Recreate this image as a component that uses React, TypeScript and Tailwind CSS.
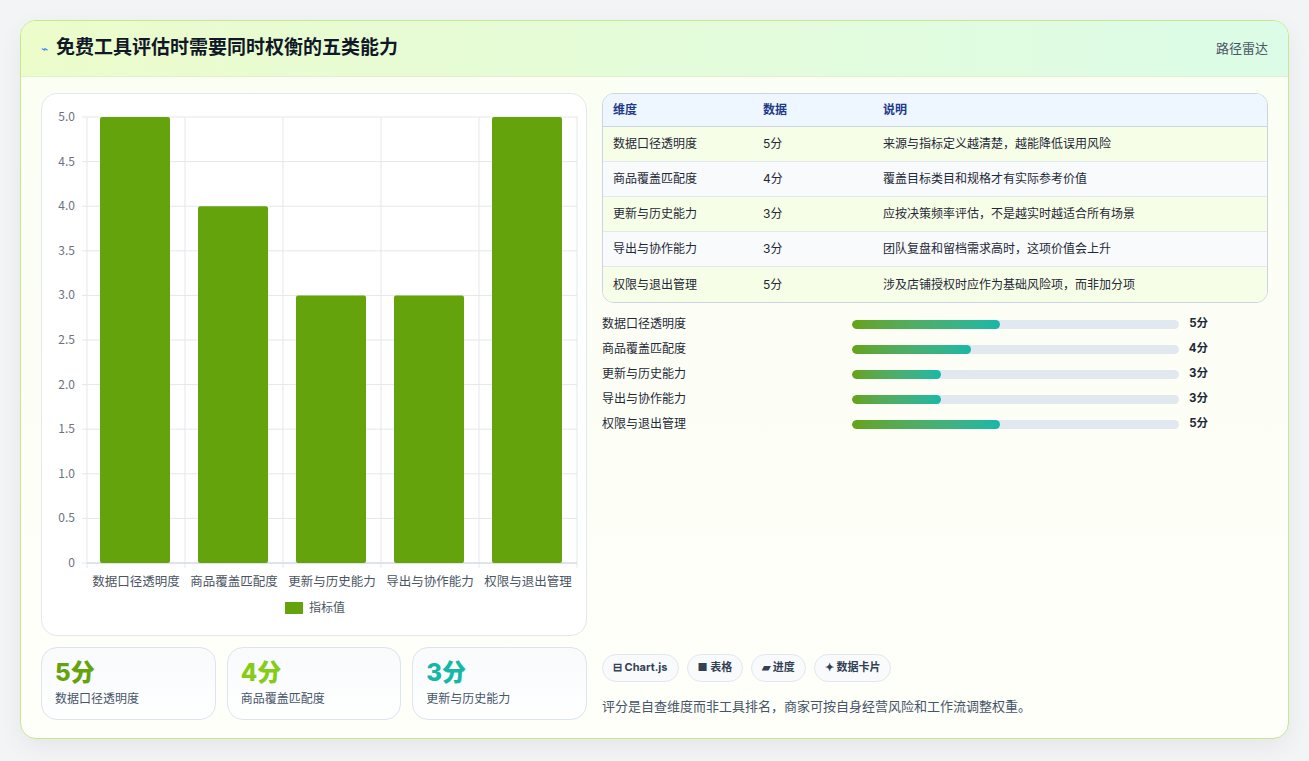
const rows = [
  { name: "数据口径透明度", score: 5, note: "来源与指标定义越清楚，越能降低误用风险" },
  { name: "商品覆盖匹配度", score: 4, note: "覆盖目标类目和规格才有实际参考价值" },
  { name: "更新与历史能力", score: 3, note: "应按决策频率评估，不是越实时越适合所有场景" },
  { name: "导出与协作能力", score: 3, note: "团队复盘和留档需求高时，这项价值会上升" },
  { name: "权限与退出管理", score: 5, note: "涉及店铺授权时应作为基础风险项，而非加分项" },
];

const Chart = () => {
  const top = 23;
  const bottom = 469;
  const left = 45;
  const right = 535;
  const col = (right - left) / 5;
  const ticks = [0, 0.5, 1, 1.5, 2, 2.5, 3, 3.5, 4, 4.5, 5];
  const y = (v: number) => bottom - ((bottom - top) * v) / 5;
  return (
    <svg width="546" height="541" className="block" style={{ fontFamily: "'Noto Sans CJK SC', sans-serif" }}>
      {ticks.map((t) => (
        <g key={t}>
          <line x1={left - 5} x2={right} y1={y(t)} y2={y(t)} stroke="#e5e7eb" />
          <text x={left - 12} y={y(t) + 4} textAnchor="end" fontSize="12" fill="#6b7280">
            {t === 0 ? "0" : t.toFixed(1)}
          </text>
        </g>
      ))}
      {[0, 1, 2, 3, 4, 5].map((i) => (
        <line key={i} x1={left + col * i} x2={left + col * i} y1={top} y2={bottom + 5} stroke="#e5e7eb" />
      ))}
      <line x1={left} x2={right} y1={bottom} y2={bottom} stroke="#cbd5e1" />
      {rows.map((r, i) => (
        <g key={r.name}>
          <rect x={left + col * i + 13} y={y(r.score)} width={70} height={bottom - y(r.score)} rx="2" fill="#65a30d" />
          <text x={left + col * i + col / 2} y={bottom + 23} textAnchor="middle" fontSize="12.5" fill="#4b5563">
            {r.name}
          </text>
        </g>
      ))}
      <rect x={243} y={508} width={18} height={12} fill="#65a30d" />
      <text x={267} y={518} fontSize="12" fill="#4b5563">指标值</text>
    </svg>
  );
};

const kpis = [
  { v: "5分", l: "数据口径透明度", c: "text-[#65a30d]" },
  { v: "4分", l: "商品覆盖匹配度", c: "text-[#84cc16]" },
  { v: "3分", l: "更新与历史能力", c: "text-[#14b8a6]" },
];

export default function App() {
  return (
    <div
      className="min-h-[761px] bg-[#f3f4f6] px-5 pt-5 pb-5"
      style={{ fontFamily: "Inter, 'Noto Sans CJK SC', sans-serif" }}
    >
      <div className="rounded-2xl border border-[#c5e88f] bg-gradient-to-b from-[#fbfef3] to-[#fefff9] shadow-[0_8px_24px_rgba(0,0,0,0.06)] overflow-hidden">
        <div className="h-[56px] flex items-center justify-between px-5 bg-gradient-to-r from-[#ecfccb] to-[#dcfce7] border-b border-[#e2efd0]">
          <div className="flex items-center gap-2">
            <span className="text-[#3b82f6] text-xs">⌁</span>
            <h1 className="text-[19px] font-bold text-[#111827]">免费工具评估时需要同时权衡的五类能力</h1>
          </div>
          <span className="text-[13px] text-[#4b5563]">路径雷达</span>
        </div>
        <div className="flex gap-[15px] px-5 pt-4 pb-[18px]">
          <div className="w-[546px] flex flex-col gap-[11px]">
            <div className="rounded-2xl border border-[#e2e8f0] bg-white">
              <Chart />
            </div>
            <div className="flex gap-[11px]">
              {kpis.map((k) => (
                <div key={k.l} className="flex-1 h-[73px] rounded-2xl border border-[#dbe4f0] bg-gradient-to-b from-[#f8fafc] to-white px-[13px] pt-[10px]">
                  <div className={`text-[24px] leading-[30px] font-extrabold ${k.c}`}>{k.v}</div>
                  <div className="text-[12px] text-[#475569] mt-[2px]">{k.l}</div>
                </div>
              ))}
            </div>
          </div>
          <div className="flex-1 flex flex-col">
            <div className="rounded-xl border border-[#cbd5e1] overflow-hidden">
              <div className="flex h-[33px] items-center bg-[#eef6ff] border-b border-[#cbd5e1] text-[12px] font-bold text-[#1e3a8a]">
                <div className="w-[160px] pl-[10px]">维度</div>
                <div className="w-[120px]">数据</div>
                <div>说明</div>
              </div>
              {rows.map((r, i) => (
                <div
                  key={r.name}
                  className={`flex h-[35px] items-center text-[12px] text-[#1f2937] ${i % 2 === 0 ? "bg-[#f7fee7]" : "bg-[#f8fafc]"} ${i < 4 ? "border-b border-[#e2e8f0]" : ""}`}
                >
                  <div className="w-[160px] pl-[10px]">{r.name}</div>
                  <div className="w-[120px]">{r.score}分</div>
                  <div>{r.note}</div>
                </div>
              ))}
            </div>
            <div className="flex flex-col gap-[7px] mt-[12px] pr-[60px]">
              {rows.map((r) => (
                <div key={r.name} className="flex items-center h-[18px] text-[12px] text-[#1f2937]">
                  <div className="w-[250px]">{r.name}</div>
                  <div className="flex-1 h-[9px] rounded-full bg-[#e2e8f0] overflow-hidden">
                    <div
                      className="h-full rounded-full bg-gradient-to-r from-[#65a30d] to-[#14b8a6]"
                      style={{ width: `${r.score * 9.07}%` }}
                    />
                  </div>
                  <div className="w-[10px]" />
                  <div className="font-bold text-[11.5px]">{r.score}分</div>
                </div>
              ))}
            </div>
            <div className="flex-1" />
            <div className="flex gap-2 mb-[15px]">
              {["⊟ Chart.js", "■ 表格", "▰ 进度", "✦ 数据卡片"].map((c) => (
                <span key={c} className="h-[28px] flex items-center px-[10px] rounded-full border border-[#e2e8f0] bg-[#f8fafc] text-[11px] font-bold text-[#334155]">
                  {c}
                </span>
              ))}
            </div>
            <p className="text-[13px] text-[#475569] mb-[4px]">评分是自查维度而非工具排名，商家可按自身经营风险和工作流调整权重。</p>
          </div>
        </div>
      </div>
    </div>
  );
}
